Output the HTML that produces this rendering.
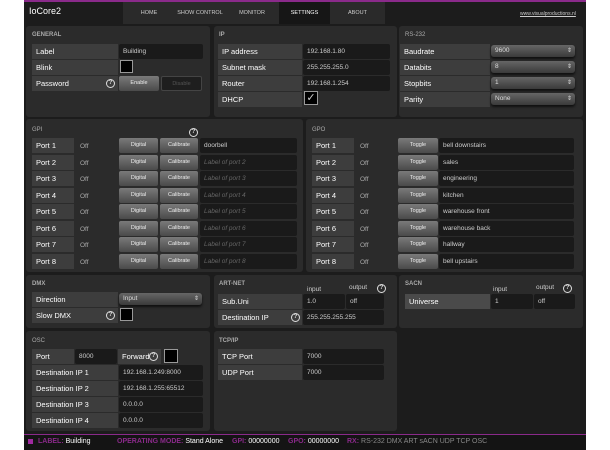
<!DOCTYPE html>
<html><head><meta charset="utf-8"><style>
*{margin:0;padding:0;box-sizing:border-box}
body{width:610px;height:450px;background:#fff;font-family:"Liberation Sans",sans-serif;font-size:7px;color:#fff;position:relative;overflow:hidden}
.a{position:absolute}
#app{left:24px;top:0;width:562px;height:450px;background:#1c1c1c;border-top:2px solid #8a2a8a}
.p{position:absolute;background:#2b2b2b;border-radius:3px}
.t{position:absolute;color:#aaa;font-size:6px;font-weight:bold}
.l{position:absolute;background:#3d3d3d;height:15px;line-height:15px;padding-left:4px;font-size:7.5px;color:#fff}
.i{position:absolute;background:#1a1a1a;height:15px;line-height:15px;padding-left:4px;font-size:6.5px;color:#ccc;border-radius:2px}
.ph{color:#666;font-style:italic}
.b{position:absolute;height:15px;line-height:15px;text-align:center;font-size:5.5px;color:#eee;border-radius:2px;background:linear-gradient(#7a7a7a,#4a4a4a)}
.s{position:absolute;height:12px;line-height:12px;padding-left:4px;font-size:6.5px;color:#ddd;border-radius:3px;background:linear-gradient(#666,#3a3a3a);box-shadow:0 2px 2px #111}
.s:after{content:"⇕";position:absolute;right:3px;font-size:6px}
.q{position:absolute;width:9px;height:9px;border:1px solid #ddd;border-radius:50%;font-size:6px;line-height:7px;text-align:center;color:#ddd;font-weight:bold}
.cb{position:absolute;width:13px;height:13px;background:#000;border:1px solid #999}
.off{position:absolute;color:#aaa;font-size:6.5px}
.nav{position:absolute;top:2px;height:22px;line-height:22px;text-align:center;font-size:5.5px;color:#ccc;background:#2a2a2a}
.st{position:absolute;top:438px;font-size:7px;white-space:nowrap;color:#fff}
.st b{color:#8a2a8a}
</style></head><body>
<div id="app" class="a"></div>
<div class="a" style="left:24px;top:0;width:562px;height:2px;background:#8a2a8a"></div>
<div class="a" style="left:29px;top:6px;font-size:9px">IoCore2</div>
<div class="nav" style="left:123px;width:52px">HOME</div>
<div class="nav" style="left:175px;width:50px">SHOW CONTROL</div>
<div class="nav" style="left:225px;width:54px">MONITOR</div>
<div class="nav" style="left:279px;width:51px;background:#161616;color:#fff">SETTINGS</div>
<div class="nav" style="left:330px;width:55px">ABOUT</div>
<div class="a" style="left:520px;top:11px;font-size:5px;color:#ccc;text-decoration:underline">www.visualproductions.nl</div>

<div class="p" style="left:26px;top:26px;width:184px;height:91px"></div>
<div class="t" style="left:32px;top:32px">GENERAL</div>
<div class="l" style="left:32px;top:44px;width:86px">Label</div><div class="i" style="left:119px;top:44px;width:84px">Building</div>
<div class="l" style="left:32px;top:60px;width:86px">Blink</div><div class="cb" style="left:120px;top:60px"></div>
<div class="l" style="left:32px;top:76px;width:86px">Password</div><div class="q" style="left:106px;top:79px">?</div>
<div class="b" style="left:119px;top:76px;width:40px">Enable</div>
<div class="b" style="left:161px;top:76px;width:41px;background:#1e1e1e;border:1px solid #444;color:#555">Disable</div>

<div class="p" style="left:214px;top:26px;width:183px;height:91px"></div>
<div class="t" style="left:219px;top:32px">IP</div>
<div class="l" style="left:218px;top:44px;width:84px">IP address</div><div class="i" style="left:303px;top:44px;width:87px">192.168.1.80</div>
<div class="l" style="left:218px;top:60px;width:84px">Subnet mask</div><div class="i" style="left:303px;top:60px;width:87px">255.255.255.0</div>
<div class="l" style="left:218px;top:76px;width:84px">Router</div><div class="i" style="left:303px;top:76px;width:87px">192.168.1.254</div>
<div class="l" style="left:218px;top:92px;width:84px">DHCP</div><div class="cb" style="left:304px;top:91px;width:14px;height:14px;font-size:11px;line-height:12px;color:#ccc;text-align:center">✓</div>

<div class="p" style="left:399px;top:26px;width:184px;height:91px"></div>
<div class="t" style="left:405px;top:32px;font-weight:normal">RS-232</div>
<div class="l" style="left:400px;top:44px;width:90px">Baudrate</div><div class="s" style="left:491px;top:45px;width:84px">9600</div>
<div class="l" style="left:400px;top:60px;width:90px">Databits</div><div class="s" style="left:491px;top:61px;width:84px">8</div>
<div class="l" style="left:400px;top:76px;width:90px">Stopbits</div><div class="s" style="left:491px;top:77px;width:84px">1</div>
<div class="l" style="left:400px;top:92px;width:90px">Parity</div><div class="s" style="left:491px;top:93px;width:84px">None</div>

<div class="p" style="left:26px;top:119px;width:277px;height:153px"></div>
<div class="t" style="left:32px;top:127px;font-weight:normal">GPI</div>
<div class="q" style="left:189px;top:128px">?</div>
<div class="p" style="left:306px;top:119px;width:277px;height:153px"></div>
<div class="t" style="left:312px;top:127px;font-weight:normal">GPO</div>

<div class="l" style="left:32px;top:138px;width:42px">Port 1</div><div class="off" style="left:80px;top:143px">Off</div><div class="b" style="left:119px;top:138px;width:39px">Digital</div><div class="b" style="left:160px;top:138px;width:38px">Calibrate</div><div class="i" style="left:200px;top:138px;width:97px">doorbell</div>
<div class="l" style="left:32px;top:154.5px;width:42px">Port 2</div><div class="off" style="left:80px;top:159.5px">Off</div><div class="b" style="left:119px;top:154.5px;width:39px">Digital</div><div class="b" style="left:160px;top:154.5px;width:38px">Calibrate</div><div class="i ph" style="left:200px;top:154.5px;width:97px">Label of port 2</div>
<div class="l" style="left:32px;top:171px;width:42px">Port 3</div><div class="off" style="left:80px;top:176px">Off</div><div class="b" style="left:119px;top:171px;width:39px">Digital</div><div class="b" style="left:160px;top:171px;width:38px">Calibrate</div><div class="i ph" style="left:200px;top:171px;width:97px">Label of port 3</div>
<div class="l" style="left:32px;top:187.5px;width:42px">Port 4</div><div class="off" style="left:80px;top:192.5px">Off</div><div class="b" style="left:119px;top:187.5px;width:39px">Digital</div><div class="b" style="left:160px;top:187.5px;width:38px">Calibrate</div><div class="i ph" style="left:200px;top:187.5px;width:97px">Label of port 4</div>
<div class="l" style="left:32px;top:204px;width:42px">Port 5</div><div class="off" style="left:80px;top:209px">Off</div><div class="b" style="left:119px;top:204px;width:39px">Digital</div><div class="b" style="left:160px;top:204px;width:38px">Calibrate</div><div class="i ph" style="left:200px;top:204px;width:97px">Label of port 5</div>
<div class="l" style="left:32px;top:220.5px;width:42px">Port 6</div><div class="off" style="left:80px;top:225.5px">Off</div><div class="b" style="left:119px;top:220.5px;width:39px">Digital</div><div class="b" style="left:160px;top:220.5px;width:38px">Calibrate</div><div class="i ph" style="left:200px;top:220.5px;width:97px">Label of port 6</div>
<div class="l" style="left:32px;top:237px;width:42px">Port 7</div><div class="off" style="left:80px;top:242px">Off</div><div class="b" style="left:119px;top:237px;width:39px">Digital</div><div class="b" style="left:160px;top:237px;width:38px">Calibrate</div><div class="i ph" style="left:200px;top:237px;width:97px">Label of port 7</div>
<div class="l" style="left:32px;top:253.5px;width:42px">Port 8</div><div class="off" style="left:80px;top:258.5px">Off</div><div class="b" style="left:119px;top:253.5px;width:39px">Digital</div><div class="b" style="left:160px;top:253.5px;width:38px">Calibrate</div><div class="i ph" style="left:200px;top:253.5px;width:97px">Label of port 8</div>

<div class="l" style="left:312px;top:138px;width:42px">Port 1</div><div class="off" style="left:360px;top:143px">Off</div><div class="b" style="left:398px;top:138px;width:40px">Toggle</div><div class="i" style="left:439px;top:138px;width:135px">bell downstairs</div>
<div class="l" style="left:312px;top:154.5px;width:42px">Port 2</div><div class="off" style="left:360px;top:159.5px">Off</div><div class="b" style="left:398px;top:154.5px;width:40px">Toggle</div><div class="i" style="left:439px;top:154.5px;width:135px">sales</div>
<div class="l" style="left:312px;top:171px;width:42px">Port 3</div><div class="off" style="left:360px;top:176px">Off</div><div class="b" style="left:398px;top:171px;width:40px">Toggle</div><div class="i" style="left:439px;top:171px;width:135px">engineering</div>
<div class="l" style="left:312px;top:187.5px;width:42px">Port 4</div><div class="off" style="left:360px;top:192.5px">Off</div><div class="b" style="left:398px;top:187.5px;width:40px">Toggle</div><div class="i" style="left:439px;top:187.5px;width:135px">kitchen</div>
<div class="l" style="left:312px;top:204px;width:42px">Port 5</div><div class="off" style="left:360px;top:209px">Off</div><div class="b" style="left:398px;top:204px;width:40px">Toggle</div><div class="i" style="left:439px;top:204px;width:135px">warehouse front</div>
<div class="l" style="left:312px;top:220.5px;width:42px">Port 6</div><div class="off" style="left:360px;top:225.5px">Off</div><div class="b" style="left:398px;top:220.5px;width:40px">Toggle</div><div class="i" style="left:439px;top:220.5px;width:135px">warehouse back</div>
<div class="l" style="left:312px;top:237px;width:42px">Port 7</div><div class="off" style="left:360px;top:242px">Off</div><div class="b" style="left:398px;top:237px;width:40px">Toggle</div><div class="i" style="left:439px;top:237px;width:135px">hallway</div>
<div class="l" style="left:312px;top:253.5px;width:42px">Port 8</div><div class="off" style="left:360px;top:258.5px">Off</div><div class="b" style="left:398px;top:253.5px;width:40px">Toggle</div><div class="i" style="left:439px;top:253.5px;width:135px">bell upstairs</div>

<div class="p" style="left:26px;top:275px;width:184px;height:53px"></div>
<div class="t" style="left:32px;top:281px">DMX</div>
<div class="l" style="left:32px;top:292px;width:86px">Direction</div><div class="s" style="left:119px;top:293px;width:83px">Input</div>
<div class="l" style="left:32px;top:308px;width:86px">Slow DMX</div><div class="q" style="left:106px;top:311px">?</div><div class="cb" style="left:120px;top:308px"></div>

<div class="p" style="left:214px;top:275px;width:183px;height:53px"></div>
<div class="t" style="left:219px;top:281px">ART-NET</div>
<div class="off" style="left:307px;top:286px;color:#ccc">input</div><div class="off" style="left:349px;top:284px;color:#ccc">output</div><div class="q" style="left:377px;top:284px">?</div>
<div class="l" style="left:218px;top:294px;width:84px">Sub.Uni</div><div class="i" style="left:303px;top:294px;width:42px">1.0</div><div class="i" style="left:346px;top:294px;width:38px">off</div>
<div class="l" style="left:218px;top:310px;width:84px">Destination IP</div><div class="q" style="left:291px;top:313px">?</div><div class="i" style="left:303px;top:310px;width:81px">255.255.255.255</div>

<div class="p" style="left:399px;top:275px;width:184px;height:53px"></div>
<div class="t" style="left:405px;top:281px">SACN</div>
<div class="off" style="left:493px;top:286px;color:#ccc">input</div><div class="off" style="left:536px;top:284px;color:#ccc">output</div><div class="q" style="left:563px;top:284px">?</div>
<div class="l" style="left:405px;top:294px;width:85px;background:#4a4a4a">Universe</div><div class="i" style="left:491px;top:294px;width:42px">1</div><div class="i" style="left:534px;top:294px;width:41px">off</div>

<div class="p" style="left:26px;top:331px;width:184px;height:100px"></div>
<div class="t" style="left:32px;top:338px;font-weight:normal">OSC</div>
<div class="l" style="left:32px;top:349px;width:42px">Port</div><div class="i" style="left:75px;top:349px;width:42px">8000</div>
<div class="l" style="left:118px;top:349px;width:43px">Forward</div><div class="q" style="left:149px;top:352px">?</div><div class="cb" style="left:164px;top:349px;width:14px;height:14px"></div>
<div class="l" style="left:32px;top:365px;width:86px">Destination IP 1</div><div class="i" style="left:119px;top:365px;width:84px">192.168.1.249:8000</div>
<div class="l" style="left:32px;top:381px;width:86px">Destination IP 2</div><div class="i" style="left:119px;top:381px;width:84px">192.168.1.255:65512</div>
<div class="l" style="left:32px;top:397px;width:86px">Destination IP 3</div><div class="i" style="left:119px;top:397px;width:84px">0.0.0.0</div>
<div class="l" style="left:32px;top:413px;width:86px">Destination IP 4</div><div class="i" style="left:119px;top:413px;width:84px">0.0.0.0</div>

<div class="p" style="left:214px;top:331px;width:183px;height:100px"></div>
<div class="t" style="left:219px;top:338px">TCP/IP</div>
<div class="l" style="left:218px;top:349px;width:84px">TCP Port</div><div class="i" style="left:303px;top:349px;width:81px">7000</div>
<div class="l" style="left:218px;top:365px;width:84px">UDP Port</div><div class="i" style="left:303px;top:365px;width:81px">7000</div>

<div class="a" style="left:24px;top:434px;width:562px;height:16px;background:#141414;border-top:1px solid #8a2a8a"></div>
<div class="a" style="left:28px;top:439px;width:5px;height:5px;background:#a02aa0"></div>
<div class="st" style="left:38px"><b>LABEL:</b> Building</div>
<div class="st" style="left:117px"><b>OPERATING MODE:</b> Stand Alone</div>
<div class="st" style="left:232px"><b>GPI:</b> 00000000</div>
<div class="st" style="left:288px"><b>GPO:</b> 00000000</div>
<div class="st" style="left:347px"><b>RX:</b> <span style="color:#888">RS-232 DMX ART sACN UDP TCP OSC</span></div>
</body></html>
